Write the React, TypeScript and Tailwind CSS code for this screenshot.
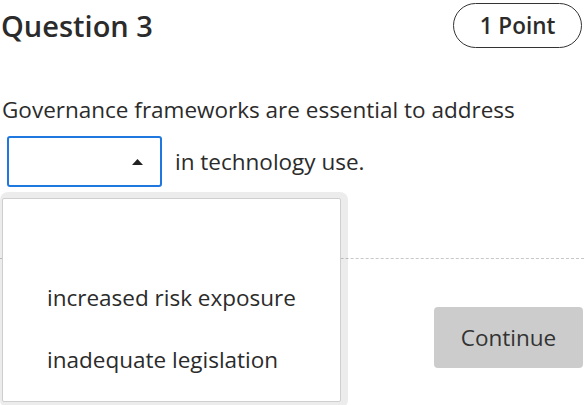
export default function App() {
  return (
    <div
      className="w-[584px] h-[405px] overflow-hidden bg-white text-[#2b2b2b]"
      style={{ fontFamily: '"Open Sans", sans-serif' }}
    >
      <div className="flex items-start justify-between pl-[1px] pr-[2px] pt-[3px]">
        <h1 className="mt-[4px] text-[29px] leading-[38px] font-semibold">Question 3</h1>
        <div className="h-[45px] w-[129px] rounded-full border-[1.5px] border-[#333] flex items-center justify-center text-[22.5px] font-semibold">
          1 Point
        </div>
      </div>

      <p className="mt-[47px] pl-[2px] text-[22.5px] leading-[30px]">
        Governance frameworks are essential to address
      </p>

      <div className="relative mt-[11px] ml-[7px] flex items-center gap-[13px]">
        <div className="w-[155px] h-[51px] border-2 border-[#1f78e0] rounded-[3px] flex items-center justify-end pr-[17px]">
          <svg width="11" height="6" viewBox="0 0 11 6">
            <path d="M0 6 L5.5 0 L11 6 Z" fill="#222" />
          </svg>
        </div>
        <span className="text-[22.5px] leading-[30px]">in technology use.</span>

        <div className="absolute left-[-7px] top-[56px] z-10 w-[348px] h-[216px] rounded-[8px] bg-black/[0.075] pl-[2px] pt-[6px] pr-[7px] pb-[6px]">
          <div className="h-full bg-white border border-[#cfcfcf] rounded-[2px]"></div>
          <div className="absolute left-[47px] top-[91px] text-[22.5px] leading-[30px]">increased risk exposure</div>
          <div className="absolute left-[47px] top-[153px] text-[22.5px] leading-[30px]">inadequate legislation</div>
        </div>
      </div>

      <div className="mt-[71px] border-t border-dashed border-[#c8c8c8]"></div>

      <div className="flex justify-end pr-[1px] mt-[48px]">
        <button className="w-[149px] h-[61px] rounded-[4px] bg-[#cccccc] text-[22.5px] text-[#333]">
          Continue
        </button>
      </div>
    </div>
  );
}
